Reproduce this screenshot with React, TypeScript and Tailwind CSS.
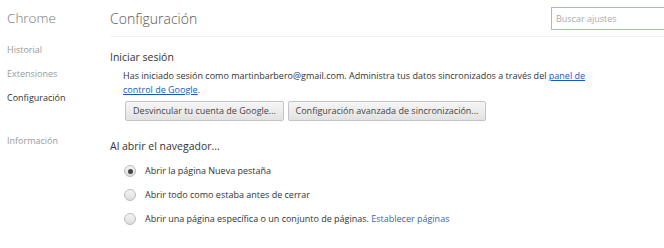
import { useState } from "react";

const NAV = [
  { label: "Historial", active: false },
  { label: "Extensiones", active: false },
  { label: "Configuración", active: true },
];

const STARTUP = [
  { label: "Abrir la página Nueva pestaña" },
  { label: "Abrir todo como estaba antes de cerrar" },
  { label: "Abrir una página específica o un conjunto de páginas.", link: "Establecer páginas" },
];

function Radio({ checked }: { checked: boolean }) {
  return (
    <span className="flex h-[12px] w-[12px] items-center justify-center rounded-full border border-[#bdbdbd] bg-gradient-to-b from-[#f4f4f4] to-[#dcdcdc]">
      {checked && <span className="h-[5px] w-[5px] rounded-full bg-[#444]" />}
    </span>
  );
}

export default function App() {
  const [startup, setStartup] = useState(0);

  return (
    <div className="flex h-[248px] w-[664px] overflow-hidden bg-white font-['Open_Sans',sans-serif] text-[#333]">
      {/* Sidebar */}
      <nav className="w-[110px] shrink-0 pl-[7px]">
        <div className="flex h-[36px] items-center text-[13.5px] font-light text-[#777]">Chrome</div>
        <ul className="mt-[7px] flex flex-col gap-[10px] text-[9px]">
          {NAV.map((n) => (
            <li key={n.label} className={`h-[14px] leading-[14px] ${n.active ? "text-[#333]" : "text-[#999]"}`}>
              {n.label}
            </li>
          ))}
        </ul>
        <div className="mt-[29px] h-[14px] text-[9px] leading-[14px] text-[#999]">Información</div>
      </nav>

      {/* Main */}
      <main className="flex-1">
        <header className="flex h-[37px] items-center justify-between border-b border-[#f0f0f0]">
          <h1 className="text-[14px] font-light text-[#555]">Configuración</h1>
          <input
            placeholder="Buscar ajustes"
            className="mr-[-20px] h-[23px] w-[133px] border border-[#a3b8e0] px-[4px] text-[9px] text-[#333] outline-none placeholder:text-[#aaa]"
          />
        </header>

        <section className="mt-[12px]">
          <h2 className="h-[16px] text-[10.5px] leading-[16px]">Iniciar sesión</h2>
          <div className="ml-[13px] mt-[4px] text-[9px] leading-[14px]">
            <p>
              Has iniciado sesión como martinbarbero@gmail.com. Administra tus datos sincronizados a través del{" "}
              <a href="#" className="text-[#1558c8] underline">
                panel de
              </a>
            </p>
            <p>
              <a href="#" className="text-[#1558c8] underline">
                control de Google
              </a>
              .
            </p>
          </div>
          <div className="ml-[15px] mt-[4px] flex gap-[4px]">
            <button className="h-[20px] w-[159px] rounded-[2px] border border-[#c4c4c4] bg-gradient-to-b from-[#f6f6f6] to-[#e2e2e2] text-[9px] text-[#444]">
              Desvincular tu cuenta de Google...
            </button>
            <button className="h-[20px] w-[198px] rounded-[2px] border border-[#c4c4c4] bg-gradient-to-b from-[#f6f6f6] to-[#e2e2e2] text-[9px] text-[#444]">
              Configuración avanzada de sincronización...
            </button>
          </div>
        </section>

        <section className="mt-[17px]">
          <h2 className="h-[16px] text-[10.5px] leading-[16px]">Al abrir el navegador...</h2>
          <ul className="ml-[14px] mt-[10px] flex flex-col gap-[10px]">
            {STARTUP.map((s, i) => (
              <li
                key={s.label}
                className="flex h-[14px] cursor-default items-center gap-[9px] text-[9px]"
                onClick={() => setStartup(i)}
              >
                <Radio checked={startup === i} />
                <span>
                  {s.label}
                  {s.link && (
                    <>
                      {" "}
                      <a href="#" className="text-[#3a5fb8]">
                        {s.link}
                      </a>
                    </>
                  )}
                </span>
              </li>
            ))}
          </ul>
        </section>
      </main>
    </div>
  );
}
